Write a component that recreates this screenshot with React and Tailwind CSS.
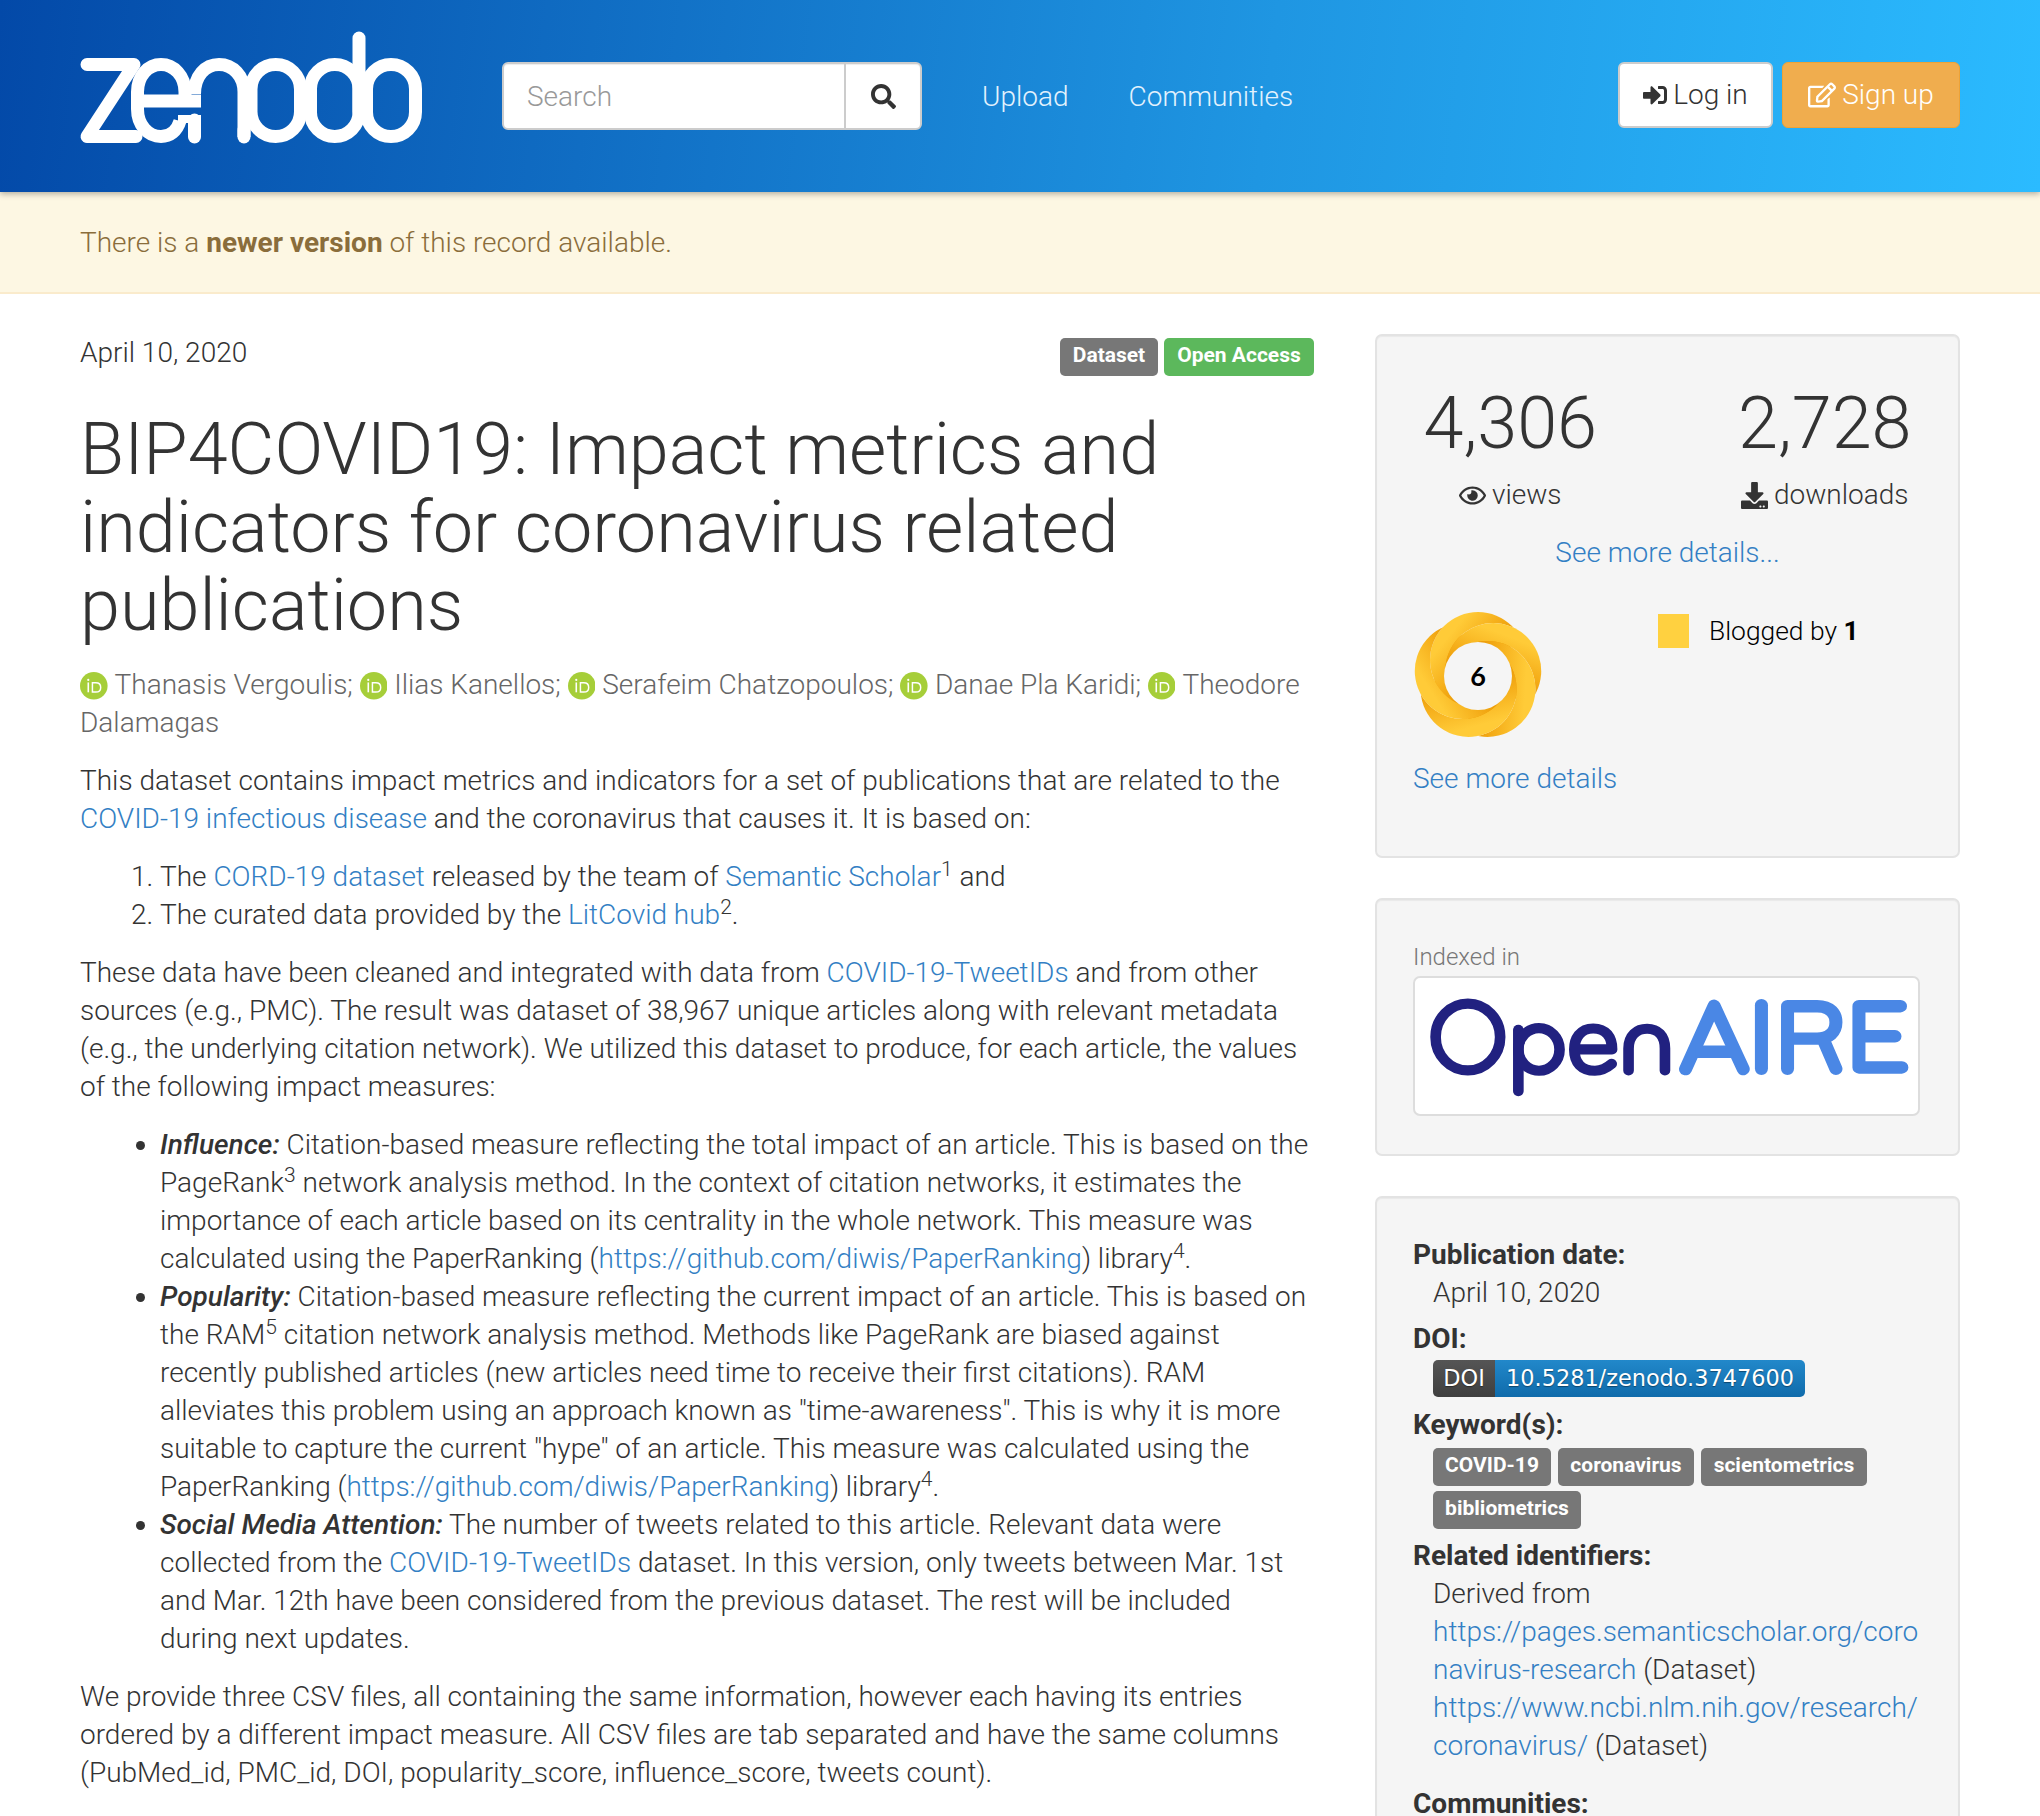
import React from "react";
import { FaSearch, FaSignInAlt, FaRegEdit, FaRegEye, FaDownload } from "react-icons/fa";

const A = ({ children, className = "" }) => (
  <a href="#" className={`text-[#337fc4] ${className}`}>{children}</a>
);

const Orcid = () => (
  <svg viewBox="0 0 28 28" className="inline-block w-[27.6px] h-[27.6px] align-[-6px] mr-[7px]">
    <circle cx="14" cy="14" r="14" fill="#a6ce39" />
    <rect x="7.6" y="10.6" width="1.6" height="10" fill="#fff" />
    <circle cx="8.4" cy="8" r="1.1" fill="#fff" />
    <path d="M12.6 10.9h3.4c3.2 0 5 2.1 5 4.8 0 2.8-2 4.7-5 4.7h-3.4z" fill="none" stroke="#fff" strokeWidth="1.5" />
  </svg>
);

const Author = ({ name, last }) => (
  <>
    <Orcid />
    {name}
    {last ? "" : "; "}
  </>
);

const ZenodoLogo = () => (
  <svg viewBox="0 0 370 140" role="img" aria-label="zenodo" className="w-[370px] h-[140px] shrink-0 mt-[20px]" fill="none" stroke="#fff" strokeWidth="13" strokeLinecap="round" strokeLinejoin="round">
    <path d="M17 44.5H64L17 116.5H66" />
    <path d="M68 81H131" strokeLinecap="butt" />
    <path d="M115 81V72C115 56 104 44.5 91 44.5C78 44.5 67.5 56 67.5 72V89C67.5 105 78 116.5 91 116.5C100 116.5 107 111 110 101" strokeLinecap="butt" />
    <rect x="108" y="95" width="23" height="8" fill="#fff" stroke="none" />
    <path d="M124.5 100V117" />
    <path d="M124.5 74C124.5 56 135 44.5 149 44.5C163 44.5 174 56 174 72V117" strokeLinecap="butt" />
    <path d="M174 117V110" />
    <rect x="181" y="44.5" width="49.5" height="72" rx="24.7" />
    <rect x="240.5" y="44.5" width="48.5" height="72" rx="24.2" />
    <path d="M289 18V92" />
    <rect x="296.5" y="44.5" width="49" height="72" rx="24.5" />
  </svg>
);

const OpenAireLogo = () => (
  <svg viewBox="44 20 1465 415" preserveAspectRatio="none" role="img" aria-label="OpenAIRE" className="w-full h-full block" fill="none" strokeLinecap="round" strokeLinejoin="round">
    <g stroke="#212180" strokeWidth="31">
      <ellipse cx="198" cy="200" rx="94" ry="102" />
      <path d="M345 178V365" />
      <ellipse cx="405" cy="238" rx="60" ry="65" />
      <path d="M508 238H618C618 200 600 174 563 174C525 174 508 205 508 238C508 280 530 303 568 303C590 303 605 293 617 282" />
      <path d="M666 302V235C666 195 690 175 720 175C750 175 772 195 772 235V302" />
    </g>
    <g stroke="#4a87e5" strokeWidth="38">
      <path d="M832 298L915 105L1000 298" />
      <path d="M860 245H975" strokeLinecap="butt" />
      <path d="M1053 103V297" />
      <path d="M1129 297V106H1215C1255 106 1270 130 1270 155C1270 185 1250 205 1215 205H1129M1232 205L1270 297" />
      <path d="M1337 293V106H1458M1337 198H1442M1337 293H1462" />
    </g>
  </svg>
);

const Donut = () => (
  <div className="relative w-[132px] h-[132px] -ml-[1px]">
    <svg viewBox="0 0 132 132" className="w-[132px] h-[132px] block">
      <defs>
        <linearGradient id="swirl" gradientUnits="userSpaceOnUse" x1="22" y1="44" x2="66" y2="80">
          <stop offset="0" stopColor="#ffcb38" />
          <stop offset="0.5" stopColor="#f5ae1a" />
          <stop offset="1" stopColor="#e79300" />
        </linearGradient>
        <mask id="blade" maskUnits="userSpaceOnUse" x="0" y="0" width="132" height="132">
          <rect x="0" y="0" width="132" height="132" fill="#fff" />
          <circle cx="66" cy="50" r="48" fill="#000" transform="rotate(72 66 66)" />
        </mask>
      </defs>
      <circle cx="66" cy="66" r="44" fill="#ee9f08" />
      {[0, 72, 144, 216, 288].map((r) => (
        <g key={r} transform={`rotate(${r} 66 66)`}>
          <circle cx="66" cy="50" r="48" fill="url(#swirl)" mask="url(#blade)" />
        </g>
      ))}
      <circle cx="66" cy="66" r="34" fill="#f5f5f5" />
    </svg>
    <span className="absolute inset-0 flex items-center justify-center font-[Lato,sans-serif] font-bold text-black text-[27px]">6</span>
  </div>
);

const Label = ({ children, className = "" }) => (
  <span className={`inline-flex items-center justify-center h-[38px] pb-[4px] rounded-[5px] text-white text-[21px] font-bold ${className}`}>{children}</span>
);

const Well = ({ children, className = "" }) => (
  <div className={`rounded-[7px] border-2 border-[#e3e3e3] bg-[#f5f5f5] shadow-[inset_0_1px_1px_rgba(0,0,0,0.05)] px-[36px] ${className}`}>{children}</div>
);

export default function App() {
  return (
    <div className="h-[1816px] overflow-hidden bg-white font-[Roboto,sans-serif] font-light text-[#333] text-[28px] leading-[38px]">
      <header className="relative z-10 h-[192px] flex items-start pl-[70px] pr-[80px] bg-[linear-gradient(97deg,#0349a8_0%,#1f96e2_62%,#2bbbff_100%)] shadow-[0_2px_6px_rgba(0,0,0,0.3)]">
        <ZenodoLogo />
        <div className="ml-[62px] mt-[62px] w-[420px] h-[68px] flex bg-white rounded-[6px] border-2 border-[#ccc] shadow-[inset_0_1px_1px_rgba(0,0,0,0.075)]">
          <div className="flex-1 pl-[23px] pt-[2px] flex items-center text-[#999]">Search</div>
          <div className="w-[76px] border-l-2 border-[#ccc] flex items-center justify-center text-[#333]">
            <FaSearch className="w-[25px] h-[25px]" />
          </div>
        </div>
        <nav className="ml-[60px] mt-[78px] flex gap-[60px] text-[#e3f2fd]">
          <a href="#">Upload</a>
          <a href="#">Communities</a>
        </nav>
        <div className="ml-auto mt-[62px] flex gap-[9px]">
          <div className="w-[155px] h-[66px] rounded-[6px] bg-white border-2 border-[#ccc] flex items-center justify-center gap-[6px] text-[#333]">
            <FaSignInAlt className="w-[24px] h-[24px]" />
            <span>Log in</span>
          </div>
          <div className="w-[178px] h-[66px] rounded-[6px] bg-[#f0ad4e] border border-[#eea236] flex items-center justify-center gap-[6px] text-white">
            <FaRegEdit className="w-[28px] h-[28px]" />
            <span>Sign up</span>
          </div>
        </div>
      </header>

      <div className="h-[102px] pt-[2px] bg-[#fdf7e3] border-b-2 border-[#faebcc] pl-[80px] flex items-center text-[#8a6d3b]">
        <p>There is a <strong className="font-bold">newer version</strong> of this record available.</p>
      </div>

      <main className="flex gap-[61px] px-[80px]">
        <article className="w-[1234px] shrink-0 pt-[40px]">
          <div className="flex items-start justify-between">
            <span>April 10, 2020</span>
            <div className="flex gap-[6px] mt-[4px]">
              <Label className="w-[98px] bg-[#777]">Dataset</Label>
              <Label className="w-[150px] bg-[#5cb85c]">Open Access</Label>
            </div>
          </div>
          <h1 className="mt-[35px] text-[72px] leading-[78px] font-light">BIP4COVID19: Impact metrics and indicators for coronavirus related publications</h1>
          <p className="mt-[21px] text-[#666]">
            <Author name="Thanasis Vergoulis" /><Author name="Ilias Kanellos" /><Author name="Serafeim Chatzopoulos" /><Author name="Danae Pla Karidi" /><Author name="Theodore Dalamagas" last />
          </p>
          <p className="mt-[20px]">This dataset contains impact metrics and indicators for a set of publications that are related to the <A>COVID-19 infectious disease</A> and the coronavirus that causes it. It is based on:</p>
          <ol className="mt-[20px] pl-[80px] list-decimal">
            <li>The <A>CORD-19 dataset</A> released by the team of <A>Semantic Scholar</A><sup>1</sup> and</li>
            <li>The curated data provided by the <A>LitCovid hub</A><sup>2</sup>.</li>
          </ol>
          <p className="mt-[20px]">These data have been cleaned and integrated with data from <A>COVID-19-TweetIDs</A> and from other sources (e.g., PMC). The result was dataset of 38,967 unique articles along with relevant metadata (e.g., the underlying citation network). We utilized this dataset to produce, for each article, the values of the following impact measures:</p>
          <ul className="mt-[20px] pl-[80px] list-disc">
            <li><strong className="font-medium"><em>Influence:</em></strong> Citation-based measure reflecting the total impact of an article. This is based on the PageRank<sup>3</sup> network analysis method. In the context of citation networks, it estimates the importance of each article based on its centrality in the whole network. This measure was calculated using the PaperRanking (<A>https://github.com/diwis/PaperRanking</A>) library<sup>4</sup>.</li>
            <li><strong className="font-medium"><em>Popularity:</em></strong> Citation-based measure reflecting the current impact of an article. This is based on the RAM<sup>5</sup> citation network analysis method. Methods like PageRank are biased against recently published articles (new articles need time to receive their first citations). RAM alleviates this problem using an approach known as "time-awareness". This is why it is more suitable to capture the current "hype" of an article. This measure was calculated using the PaperRanking (<A>https://github.com/diwis/PaperRanking</A>) library<sup>4</sup>.</li>
            <li><strong className="font-medium"><em>Social Media Attention:</em></strong> The number of tweets related to this article. Relevant data were collected from the <A>COVID-19-TweetIDs</A> dataset. In this version, only tweets between Mar. 1st and Mar. 12th have been considered from the previous dataset. The rest will be included during next updates.</li>
          </ul>
          <p className="mt-[20px]">We provide three CSV files, all containing the same information, however each having its entries ordered by a different impact measure. All CSV files are tab separated and have the same columns (PubMed_id, PMC_id, DOI, popularity_score, influence_score, tweets count).</p>
        </article>

        <aside className="w-[585px] shrink-0 pt-[40px] flex flex-col gap-[40px]">
          <Well className="h-[524px] pt-[49px]">
            <div className="grid grid-cols-2 -mx-[60px] text-center">
              <div>
                <div className="text-[72px] leading-[78px]">4,306</div>
                <div className="mt-[13px] flex items-center justify-center gap-[6px]"><FaRegEye className="w-[27px] h-[27px]" />views</div>
              </div>
              <div>
                <div className="text-[72px] leading-[78px]">2,728</div>
                <div className="mt-[13px] flex items-center justify-center gap-[6px]"><FaDownload className="w-[27px] h-[27px]" />downloads</div>
              </div>
            </div>
            <div className="mt-[20px] text-center"><A>See more details...</A></div>
            <div className="mt-[38px] flex items-start">
              <Donut />
              <div className="ml-[114px] mt-[2px] flex items-center text-black">
                <span className="w-[31px] h-[34px] bg-[#ffd140] mr-[20px]" />
                <span className="text-[26.4px]">Blogged by <b className="font-bold">1</b></span>
              </div>
            </div>
            <div className="mt-[18px]"><A>See more details</A></div>
          </Well>

          <Well className="h-[258px] pt-[39px]">
            <div className="text-[#777] text-[24px] leading-[37px]">Indexed in</div>
            <div className="w-[507px] h-[140px] rounded-[7px] bg-white border-2 border-[#ddd] overflow-hidden">
              <OpenAireLogo />
            </div>
          </Well>

          <Well className="pt-[38px] pb-[40px]">
            <div className="font-bold">Publication date:</div>
            <div className="pl-[20px]">April 10, 2020</div>
            <div className="font-bold mt-[8px]">DOI:</div>
            <div className="ml-[20px] mt-[2px] w-[372px] h-[37px] flex rounded-[5px] overflow-hidden font-['DejaVu_Sans',sans-serif] font-normal text-white text-[22.4px] leading-[37px] [text-shadow:0_1px_1px_rgba(0,0,0,0.4)]">
              <span className="w-[62px] text-center bg-[linear-gradient(#555,#3f3f3f)]">DOI</span>
              <span className="flex-1 text-center bg-[linear-gradient(#2288ca,#0f6bab)]">10.5281/zenodo.3747600</span>
            </div>
            <div className="font-bold mt-[9px]">Keyword(s):</div>
            <div className="ml-[20px] flex flex-wrap gap-x-[7px] gap-y-[5px] mt-[4px]">
              <Label className="w-[118px] bg-[#777]">COVID-19</Label>
              <Label className="w-[136px] bg-[#777]">coronavirus</Label>
              <Label className="w-[166px] bg-[#777]">scientometrics</Label>
              <Label className="w-[148px] bg-[#777]">bibliometrics</Label>
            </div>
            <div className="font-bold mt-[8px]">Related identifiers:</div>
            <div className="pl-[20px]">Derived from</div>
            <div className="pl-[20px]">
              <A className="break-all">https://pages.semanticscholar.org/coronavirus-research</A> (Dataset)
            </div>
            <div className="pl-[20px]">
              <A className="break-all">https://www.ncbi.nlm.nih.gov/research/coronavirus/</A> (Dataset)
            </div>
            <div className="font-bold mt-[20px]">Communities:</div>
          </Well>
        </aside>
      </main>
    </div>
  );
}
